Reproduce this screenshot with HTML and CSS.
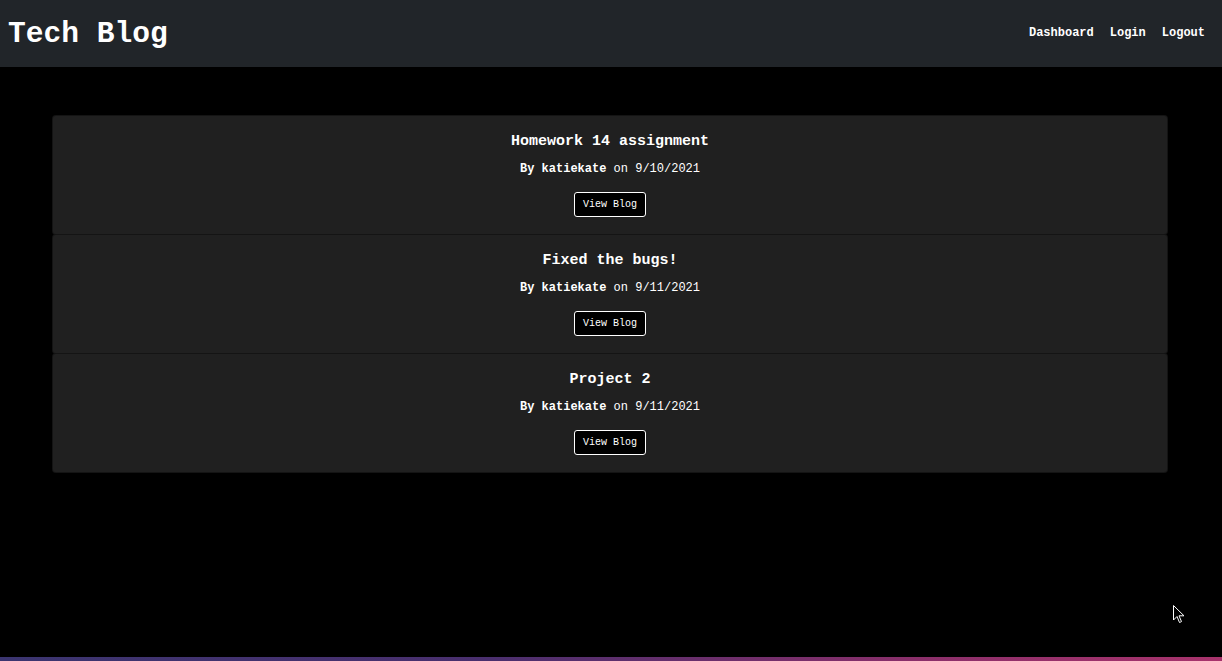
FILE: index.html
```html
<!DOCTYPE html>
<html lang="en">
<head>
<meta charset="utf-8">
<title>Tech Blog</title>
<link rel="stylesheet" href="styles.css">
</head>
<body>
<div class="window">
  <header class="topbar">
    <h1 class="brand">Tech Blog</h1>
    <nav class="nav">
      <a href="#">Dashboard</a>
      <a href="#">Login</a>
      <a href="#">Logout</a>
    </nav>
  </header>
  <main class="container">
    <article class="card">
      <h2 class="card-title">Homework 14 assignment</h2>
      <p class="byline"><strong>By katiekate</strong> on 9/10/2021</p>
      <a class="btn" href="#">View Blog</a>
    </article>
    <article class="card">
      <h2 class="card-title">Fixed the bugs!</h2>
      <p class="byline"><strong>By katiekate</strong> on 9/11/2021</p>
      <a class="btn" href="#">View Blog</a>
    </article>
    <article class="card">
      <h2 class="card-title">Project 2</h2>
      <p class="byline"><strong>By katiekate</strong> on 9/11/2021</p>
      <a class="btn" href="#">View Blog</a>
    </article>
  </main>
  <svg class="cursor" width="12" height="19" viewBox="0 0 12 19"><path d="M0.5 0.5 L0.5 15 L4 11.5 L6.5 17.5 L8.5 16.6 L6 10.8 L11 10.8 Z" fill="#000" stroke="#fff" stroke-width="1"/></svg>
</div>
<div class="desktop-strip"></div>
</body>
</html>
```
FILE: styles.css
```css
* { box-sizing: border-box; }
html, body { margin: 0; padding: 0; height: 100%; }
body {
  background: #000;
  font-family: "Courier New", "Nimbus Mono PS", "FreeMono", "Liberation Mono", monospace;
  color: #fff;
  display: flex;
  flex-direction: column;
  overflow: hidden;
}
.window {
  flex: 1;
  background: #000;
  border-radius: 0 0 6px 6px;
  position: relative;
  display: flex;
  flex-direction: column;
}
.topbar {
  height: 67px;
  background: #212529;
  display: flex;
  align-items: center;
  justify-content: space-between;
  padding: 0 17px 0 8px;
}
.brand {
  margin: 0;
  padding-top: 2px;
  font-size: 29.6px;
  font-weight: bold;
  line-height: 1;
  color: #fff;
}
.nav {
  display: flex;
  gap: 16px;
  padding-bottom: 2px;
}
.nav a {
  color: #fff;
  text-decoration: none;
  font-size: 12px;
  font-weight: bold;
}
.container {
  width: 1116px;
  margin: 49px auto 0 52px;
  display: flex;
  flex-direction: column;
}
.card {
  background: #202020;
  border: 1px solid rgba(0,0,0,0.35);
  border-radius: 4px;
  height: 120px;
  padding: 17px 16px 0;
  display: flex;
  flex-direction: column;
  align-items: center;
  margin-top: -1px;
}
.card-title {
  margin: 0;
  font-size: 15px;
  line-height: 18px;
  font-weight: bold;
}
.byline {
  margin: 10px 0 0;
  font-size: 12px;
  line-height: 16px;
  font-weight: normal;
}
.byline strong { font-weight: bold; }
.btn {
  margin-top: 15px;
  display: inline-block;
  height: 25px;
  line-height: 23px;
  padding: 0 8px;
  border: 1px solid #fff;
  border-radius: 3px;
  background: #000;
  color: #fff;
  text-decoration: none;
  font-size: 10px;
  font-weight: normal;
}
.cursor {
  position: absolute;
  left: 1173px;
  top: 605px;
}
.desktop-strip {
  height: 4px;
  flex: none;
  background: linear-gradient(90deg, #3b3570 0%, #4a2f6e 40%, #8a2f6a 75%, #a8336c 100%);
}
```
